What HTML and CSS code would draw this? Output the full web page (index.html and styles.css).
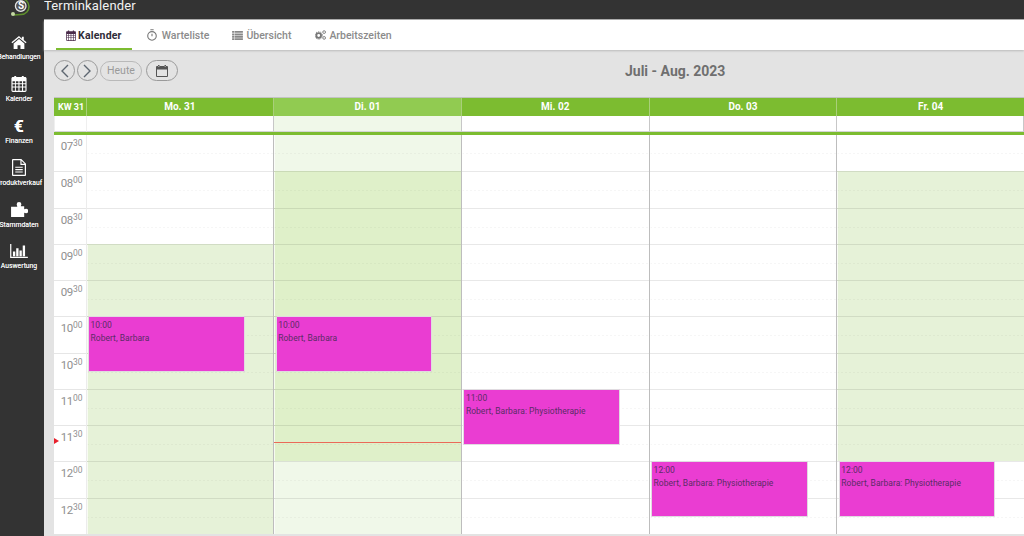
FILE: index.html
```html
<!DOCTYPE html>
<html lang="de">
<head>
<meta charset="utf-8">
<title>Terminkalender</title>
<link rel="stylesheet" href="styles.css">
</head>
<body>
<div class="page">
  <aside class="sidebar">
    <div class="logo">
      <svg width="44" height="19" viewBox="0 0 44 19"><path d="M11-2c2 2 5 0 10 .500c5 .5 8 4 8 8c0 4-3 8-8 8c-3 0-5 0-7 .500" fill="none" stroke="#5f8f2c" stroke-width="1.500"/><circle cx="13" cy="14" r="2" fill="#c5d9a5"/><circle cx="20.700" cy="6" r="5.300" fill="#555" stroke="#e6e6e6" stroke-width="1.300"/></svg>
      <span class="logo-s">S</span>
    </div>
    <nav class="side-nav">
      <a class="side-item"><span class="icon-box"><svg width="16" height="13" viewBox="0 0 18 15"><path d="M9 0 0.300 7.300l1 1.200L9 2.100l7.700 6.400 1-1.200-3.200-2.700V1h-2.200v2.200z" fill="#fff"/><path d="M9 3.500 2.800 8.700V15h4.500v-4.200h3.400V15h4.500V8.700z" fill="#fff"/></svg></span><span>Behandlungen</span></a>
      <a class="side-item"><span class="icon-box"><svg width="16" height="17" viewBox="0 0 16 18"><path fill-rule="evenodd" d="M1.500 2H3V1h2v1h6V1h2v1h1.500C15.300 2 16 2.700 16 3.500v13c0 .8-.7 1.500-1.500 1.500h-13C.7 18 0 17.300 0 16.500v-13C0 2.700.7 2 1.500 2zM1.200 6.500v2.300h2.500V6.500zm3.500 0v2.300h2.700V6.500zm3.800 0v2.300h2.700V6.500zm3.800 0v2.300h2.500V6.500zM1.200 9.800v2.400h2.500V9.800zm3.500 0v2.400h2.700V9.800zm3.800 0v2.400h2.700V9.800zm3.800 0v2.400h2.500V9.800zM1.200 13.200v3.500h2.500v-3.500zm3.500 0v3.500h2.700v-3.500zm3.800 0v3.500h2.700v-3.500zm3.800 0v3.500h2.500v-3.500z" fill="#fff"/></svg></span><span>Kalender</span></a>
      <a class="side-item"><span class="icon-box euro">€</span><span>Finanzen</span></a>
      <a class="side-item"><span class="icon-box"><svg width="14" height="17" viewBox="0 0 15 18"><path fill-rule="evenodd" d="M1 0h9l5 5v12a1 1 0 0 1-1 1H1a1 1 0 0 1-1-1V1a1 1 0 0 1 1-1zm.300 1.300v15.400h12.400V6.200H9V1.300zM10.200 1.800v3.200h3.200zM3.500 8.200h8v1.200h-8zm0 2.500h8v1.200h-8zm0 2.500h8v1.200h-8z" fill="#fff"/></svg></span><span>Produktverkauf</span></a>
      <a class="side-item"><span class="icon-box"><svg width="17" height="15" viewBox="0 0 18 16"><path d="M6 2.500a2.500 2.500 0 0 1 5 0c0 .8-.6 1.300-.6 2h3.600v3.300c.7 0 1.200-.6 2-.6a2.400 2.400 0 0 1 0 4.800c-.8 0-1.300-.6-2-.6V16H0V5h6.600C6.600 4 6 3.400 6 2.500z" fill="#fff"/></svg></span><span>Stammdaten</span></a>
      <a class="side-item"><span class="icon-box"><svg width="18" height="14" viewBox="0 0 19 15"><path d="M0 0h1.300v13.700H19V15H0zM3 8h2.500v5H3zM6.500 4.500H9V13H6.500zM10 7h2.500v6H10zM13.500 1.500H16V13h-2.500z" fill="#fff"/></svg></span><span>Auswertung</span></a>
    </nav>
  </aside>
  <div class="main">
    <header class="titlebar">Terminkalender</header>
    <nav class="tabs">
      <a class="tab active"><svg width="10" height="11" viewBox="0 0 16 18"><path fill-rule="evenodd" d="M1.500 2H3V1h2v1h6V1h2v1h1.500C15.300 2 16 2.700 16 3.500v13c0 .8-.7 1.500-1.500 1.500h-13C.7 18 0 17.300 0 16.500v-13C0 2.700.7 2 1.500 2zM1.200 6.500v2.300h2.500V6.500zm3.500 0v2.300h2.700V6.500zm3.800 0v2.300h2.700V6.500zm3.800 0v2.300h2.500V6.500zM1.200 9.800v2.400h2.500V9.800zm3.500 0v2.400h2.700V9.800zm3.800 0v2.400h2.700V9.800zm3.800 0v2.400h2.500V9.800zM1.200 13.200v3.500h2.500v-3.500zm3.500 0v3.500h2.700v-3.500zm3.800 0v3.500h2.700v-3.500zm3.800 0v3.500h2.500v-3.500z" fill="#4a2b4a"/></svg>Kalender</a>
      <a class="tab tab-wait"><svg width="10" height="12" viewBox="0 0 11 13"><circle cx="5.500" cy="7.500" r="4.700" fill="none" stroke="#777" stroke-width="1.200"/><path d="M3.700.7h3.600M5.500 5v3" stroke="#777" stroke-width="1.200" fill="none"/></svg>Warteliste</a>
      <a class="tab"><svg width="11" height="9" viewBox="0 0 12 10"><path d="M0 0h2.500v2H0zM3 0h9v2H3zM0 2.700h2.500v2H0zM3 2.700h9v2H3zM0 5.400h2.500v2H0zM3 5.400h9v2H3zM0 8h2.500v2H0zM3 8h9v2H3z" fill="#888"/></svg>Übersicht</a>
      <a class="tab"><svg width="11" height="10" viewBox="0 0 12 11"><circle cx="4" cy="6" r="2.600" fill="none" stroke="#777" stroke-width="2"/><circle cx="4" cy="6" r="4.100" fill="none" stroke="#777" stroke-width="1" stroke-dasharray="1.300 1.300"/><circle cx="10" cy="2.300" r="1.500" fill="none" stroke="#777" stroke-width="1"/><circle cx="10" cy="8.700" r="1.500" fill="none" stroke="#777" stroke-width="1"/></svg>Arbeitszeiten</a>
    </nav>
    <section class="content">
      <div class="toolbar">
        <button class="btn round"><svg width="9" height="14" viewBox="0 0 9 14"><path d="M8 1 2 7l6 6" fill="none" stroke="#5d6670" stroke-width="1.400"/></svg></button>
        <button class="btn round"><svg width="9" height="14" viewBox="0 0 9 14"><path d="M1 1l6 6-6 6" fill="none" stroke="#5d6670" stroke-width="1.400"/></svg></button>
        <button class="btn pill">Heute</button>
        <button class="btn wide"><svg width="12" height="12" viewBox="0 0 12 12"><path fill-rule="evenodd" d="M1 1h10a1 1 0 0 1 1 1v9a1 1 0 0 1-1 1H1a1 1 0 0 1-1-1V2a1 1 0 0 1 1-1zm0 3.500V11h10V4.500zM2 0h1.500v1.500H2zm6.500 0H10v1.500H8.500z" fill="#555"/></svg></button>
        <h2 class="range">Juli - Aug. 2023</h2>
      </div>
      <div class="calendar">
        <div class="head-row">
          <div class="kw">KW 31</div>
          <div class="day-head">Mo. 31</div>
          <div class="day-head today">Di. 01</div>
          <div class="day-head">Mi. 02</div>
          <div class="day-head">Do. 03</div>
          <div class="day-head">Fr. 04</div>
        </div>
        <div class="allday-row">
          <div class="allday"></div>
          <div class="allday"></div>
          <div class="allday today"></div>
          <div class="allday"></div>
          <div class="allday"></div>
          <div class="allday"></div>
        </div>
        <div class="grid">
          <div class="times">
            <div class="time">07<sup>30</sup></div>
            <div class="time">08<sup>00</sup></div>
            <div class="time">08<sup>30</sup></div>
            <div class="time">09<sup>00</sup></div>
            <div class="time">09<sup>30</sup></div>
            <div class="time">10<sup>00</sup></div>
            <div class="time">10<sup>30</sup></div>
            <div class="time">11<sup>00</sup></div>
            <div class="time">11<sup>30</sup></div>
            <div class="time">12<sup>00</sup></div>
            <div class="time">12<sup>30</sup></div>
          </div>
          <div class="day">
            <div class="slot"></div><div class="slot"></div><div class="slot"></div>
            <div class="slot open"></div><div class="slot open"></div><div class="slot open"></div><div class="slot open"></div><div class="slot open"></div><div class="slot open"></div><div class="slot open"></div><div class="slot open"></div>
            <div class="event at-10"><div>10:00</div><div class="event-name">Robert, Barbara</div></div>
          </div>
          <div class="day">
            <div class="slot today"></div>
            <div class="slot today-open"></div><div class="slot today-open"></div><div class="slot today-open"></div><div class="slot today-open"></div><div class="slot today-open"></div><div class="slot today-open"></div><div class="slot today-open"></div><div class="slot today-open"></div>
            <div class="slot today"></div><div class="slot today"></div>
            <div class="event at-10"><div>10:00</div><div class="event-name">Robert, Barbara</div></div>
            <div class="now"></div>
          </div>
          <div class="day">
            <div class="slot"></div><div class="slot"></div><div class="slot"></div><div class="slot"></div><div class="slot"></div><div class="slot"></div><div class="slot"></div><div class="slot"></div><div class="slot"></div><div class="slot"></div><div class="slot"></div>
            <div class="event at-11"><div>11:00</div><div class="event-name">Robert, Barbara: Physiotherapie</div></div>
          </div>
          <div class="day">
            <div class="slot"></div><div class="slot"></div><div class="slot"></div><div class="slot"></div><div class="slot"></div><div class="slot"></div><div class="slot"></div><div class="slot"></div><div class="slot"></div><div class="slot"></div><div class="slot"></div>
            <div class="event at-12"><div>12:00</div><div class="event-name">Robert, Barbara: Physiotherapie</div></div>
          </div>
          <div class="day">
            <div class="slot"></div>
            <div class="slot open"></div><div class="slot open"></div><div class="slot open"></div><div class="slot open"></div><div class="slot open"></div><div class="slot open"></div><div class="slot open"></div><div class="slot open"></div>
            <div class="slot"></div><div class="slot"></div>
            <div class="event at-12"><div>12:00</div><div class="event-name">Robert, Barbara: Physiotherapie</div></div>
          </div>
          <span class="now-arrow"></span>
        </div>
      </div>
    </section>
  </div>
</div>
</body>
</html>
```
FILE: styles.css
```css
* { box-sizing: border-box; }
html, body { margin: 0; height: 536px; overflow: hidden; }
body { font-family: Roboto, "Liberation Sans", sans-serif; background: #e3e3e3; }
.page { display: flex; height: 536px; }

.sidebar { width: 44px; flex: none; background: #333; overflow: hidden; display: flex; flex-direction: column; }
.logo { position: relative; width: 44px; height: 19px; flex: none; }
.logo svg { display: block; }
.logo-s { position: absolute; left: 17px; top: 0; width: 8px; text-align: center; font-size: 10px; font-weight: 700; line-height: 12px; color: #fff; }
.side-nav { display: flex; flex-direction: column; padding-top: 13px; }
.side-item { display: flex; flex-direction: column; align-items: center; width: 38px; height: 41.900px; font-size: 6.800px; line-height: 9px; color: #f1f1f1; white-space: nowrap; text-shadow: 0 0 .3px #f1f1f1; }
.side-item > span:last-child { margin-top: 1px; }
.icon-box { display: flex; align-items: center; justify-content: center; flex: none; height: 20px; }
.euro { font-size: 17px; line-height: 20px; font-weight: 700; color: #fff; }

.main { flex: 1; min-width: 0; display: flex; flex-direction: column; }
.titlebar { height: 20px; flex: none; background: #333; border-bottom: 1px solid #aaa; color: #f2f2f2; font-size: 13px; line-height: 11px; overflow: hidden; letter-spacing: .15px; }
.tabs { height: 30px; flex: none; background: #fff; display: flex; padding-left: 12px; box-shadow: 0 1px 2px #bbb; position: relative; }
.tab { display: flex; align-items: center; gap: 3px; height: 30px; padding: 0 10px; margin-right: 4px; font-size: 10.500px; font-weight: 500; color: #8b8b8b; }
.tab.active { font-weight: 700; color: #2f2c38; gap: 2px; letter-spacing: .2px; border-bottom: 2.500px solid #7cbc30; padding-top: 2.500px; }
.tab-wait { gap: 5px; margin-left: 1px; margin-right: 3px; }

.content { flex: 1; min-height: 0; padding-left: 10px; }
.toolbar { display: flex; align-items: center; height: 47px; padding-bottom: 6px; }
.btn { display: flex; align-items: center; justify-content: center; padding: 0; height: 21px; background: transparent; border: 1px solid #9a9a9a; border-radius: 11px; font-family: inherit; }
.round { width: 21px; margin-right: 2px; border-width: 1.500px; }
.pill { width: 42px; height: 20px; margin-right: 4px; font-size: 10.500px; color: #9a9a9a; border-color: #b9b9b9; }
.wide { width: 32px; border-width: 1.500px; }
.range { margin: 0 0 0 447px; font-size: 14px; line-height: 18px; font-weight: 700; color: #6f6f6f; white-space: nowrap; }

.calendar { background: #fff; }
.head-row, .allday-row, .grid { display: grid; grid-template-columns: 31.500px repeat(5, 1fr); }
.head-row { height: 19px; background: #7cbc30; color: #fff; font-size: 10px; font-weight: 700; line-height: 18px; text-align: center; border-top: 1px solid #c3c3c3; }
.kw { text-align: left; padding-left: 4px; font-size: 9px; }
.day-head { border-left: 1px solid #a9cf7a; }
.day-head.today { background: #91cb51; }
.allday-row { height: 19px; border-bottom: 3px solid #7cbc30; }
.allday { border-left: 1px solid #c7c7c7; border-bottom: 1px solid #d5d5d5; }
.allday:first-child, .allday:nth-child(2) { border-left-color: #efefef; }
.allday:last-child { border-right: 1px solid #c7c7c7; }
.allday.today { background: #f0f8e9; }
.grid { position: relative; }
.times { background: #fff; }
.time { height: 36.250px; border-top: 1px solid #e6e6e6; text-align: right; padding: 3px 3px 0 0; font-size: 11.500px; line-height: 16px; letter-spacing: -.4px; color: #8f8f8f; }
.time:first-child { border-top: 0; }
.time sup { font-size: 8.500px; line-height: 0; letter-spacing: 0; vertical-align: 4px; }
.day { position: relative; border-left: 1px solid #bdbdbd; }
.times + .day { border-left-color: #ececec; }
.slot { height: 36.250px; border-top: 1px solid rgba(0, 0, 0, .09); box-shadow: inset 1px 0 0 rgba(255, 255, 255, .7); background: #fff linear-gradient(90deg, rgba(0, 0, 0, .035) 2px, transparent 2px) 0 18px / 4px 1px repeat-x; }
.slot:first-child { border-top: 0; }
.slot.open { background-color: #e6f2d8; }
.slot.today { background-color: #f0f8e9; }
.slot.today-open { background-color: #dff0c9; }
.event { position: absolute; left: 1.500px; width: 156.500px; height: 56px; padding: 3px 1.500px; background: #ea3dd2; border: 1px solid #e0dbe0; border-radius: 1px; font-size: 8.500px; line-height: 10px; letter-spacing: .03px; color: #5a2c66; overflow: hidden; white-space: nowrap; }
.event-name { margin-top: 3px; }
.at-10 { top: 181.250px; }
.at-11 { top: 253.750px; }
.at-12 { top: 326.250px; }
.now { position: absolute; left: 0; right: 0; top: 306.500px; border-top: 1px solid #ea6a58; }
.now-arrow { position: absolute; left: 0; top: 303px; border-left: 5px solid #e8202c; border-top: 3px solid transparent; border-bottom: 3px solid transparent; }
```
